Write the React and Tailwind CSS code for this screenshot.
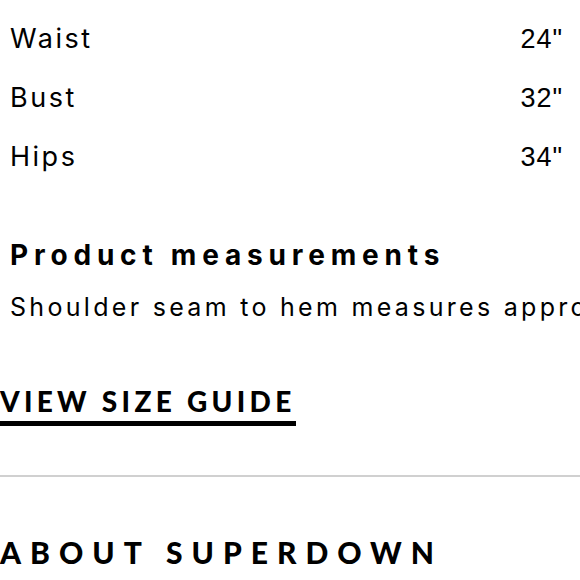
export default function App() {
  const rows = [
    ["Waist", '24"'],
    ["Bust", '32"'],
    ["Hips", '34"'],
  ];
  return (
    <div className="w-[580px] h-[580px] overflow-hidden bg-white text-black">
      <div className="pt-[10px]">
        {rows.map(([k, v]) => (
          <div key={k} className="flex justify-between items-center h-[59px] pl-[10px] pr-[17px]">
            <span className="text-[27px] tracking-[2.5px] font-['Inter',sans-serif]">{k}</span>
            <span className="text-[27px] tracking-[1px] font-['Liberation_Sans',sans-serif]">{v}</span>
          </div>
        ))}
      </div>
      <div className="pl-[10px] mt-[50px]">
        <div className="text-[28px] leading-[36px] font-bold tracking-[5.8px] whitespace-nowrap font-['Inter',sans-serif]">
          Product measurements
        </div>
        <div className="text-[25px] leading-[36px] tracking-[3.3px] whitespace-nowrap overflow-hidden font-['Inter',sans-serif] mt-[16px]">
          Shoulder seam to hem measures approx
        </div>
      </div>
      <div className="mt-[60px]">
        <span className="inline-block text-[28px] leading-[32px] pb-[4px] font-black tracking-[4.3px] font-['Lato',sans-serif] border-b-[5px] border-black">
          VIEW SIZE GUIDE
        </span>
      </div>
      <div className="mt-[49px] h-[2px] bg-[#d0d0d0]" />
      <div className="mt-[57px] text-[30px] leading-[36px] font-black tracking-[9px] whitespace-nowrap font-['Lato',sans-serif]">
        ABOUT SUPERDOWN
      </div>
    </div>
  );
}
